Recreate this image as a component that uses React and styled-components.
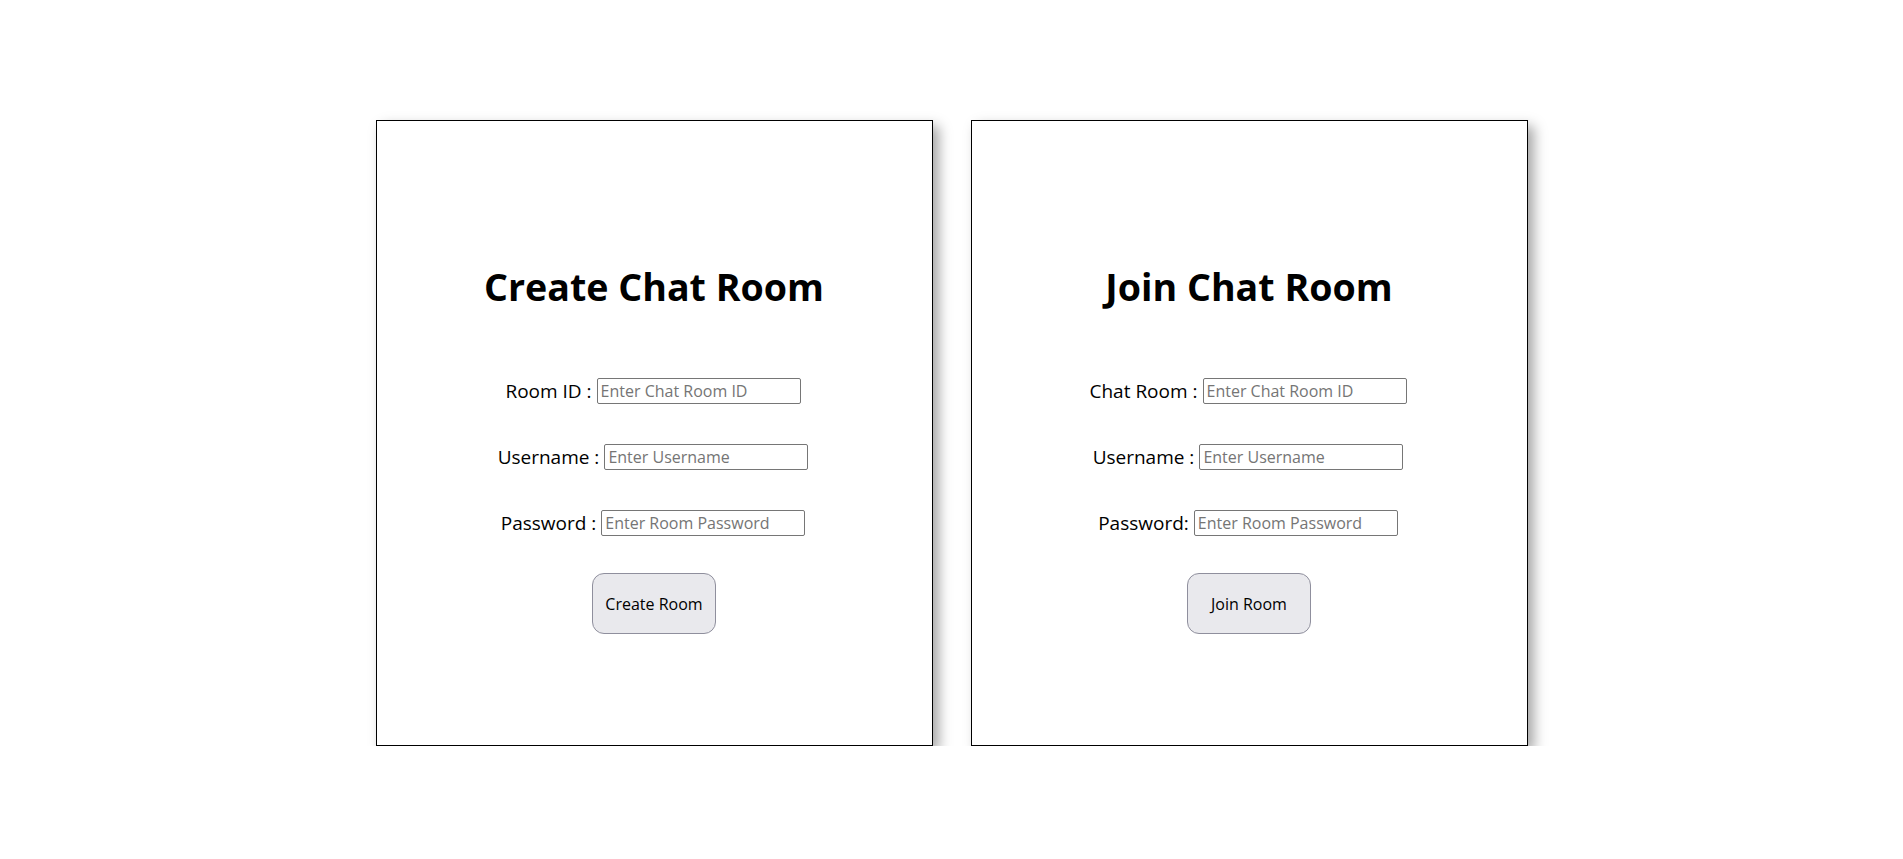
import React, { useState } from 'react'
import styled, { createGlobalStyle } from 'styled-components'

const GlobalStyle = createGlobalStyle`
  body {
    margin: 0;
    background: #fff;
    font-family: "Open Sans", "Noto Sans", sans-serif;
    color: #000;
  }
`

const App = () => {
  const [create, setCreate] = useState({ room: '', user: '', pass: '' })
  const [join, setJoin] = useState({ room: '', user: '', pass: '' })

  return (
    <>
      <GlobalStyle />
      <MainContainer>
        <Card>
          <Title>Create Chat Room</Title>
          <Form>
            <Row>
              <Label>Room ID :</Label>
              <Input placeholder="Enter Chat Room ID" value={create.room} onChange={(e) => setCreate({ ...create, room: e.target.value })} />
            </Row>
            <Row>
              <Label>Username :</Label>
              <Input placeholder="Enter Username" value={create.user} onChange={(e) => setCreate({ ...create, user: e.target.value })} />
            </Row>
            <Row>
              <Label>Password :</Label>
              <Input type="password" placeholder="Enter Room Password" value={create.pass} onChange={(e) => setCreate({ ...create, pass: e.target.value })} />
            </Row>
            <Button type="button">Create Room</Button>
          </Form>
        </Card>
        <Card>
          <Title>Join Chat Room</Title>
          <Form>
            <Row>
              <Label>Chat Room :</Label>
              <Input placeholder="Enter Chat Room ID" value={join.room} onChange={(e) => setJoin({ ...join, room: e.target.value })} />
            </Row>
            <Row>
              <Label>Username :</Label>
              <Input placeholder="Enter Username" value={join.user} onChange={(e) => setJoin({ ...join, user: e.target.value })} />
            </Row>
            <Row>
              <Label>Password:</Label>
              <Input type="password" placeholder="Enter Room Password" value={join.pass} onChange={(e) => setJoin({ ...join, pass: e.target.value })} />
            </Row>
            <Button type="button">Join Room</Button>
          </Form>
        </Card>
      </MainContainer>
    </>
  )
}

export default App

const MainContainer = styled.div`
  display: flex;
  justify-content: center;
  gap: 38px;
  padding-top: 120px;
`

const Card = styled.div`
  box-sizing: border-box;
  width: 557px;
  height: 626px;
  border: 1px solid #000;
  background: #fff;
  box-shadow: 6px 6px 12px rgba(0, 0, 0, 0.35);
  display: flex;
  flex-direction: column;
  align-items: center;
  padding-top: 140px;
`

const Title = styled.h1`
  margin: 0;
  font-size: 37.6px;
  font-weight: 700;
  line-height: 52px;
`

const Form = styled.form`
  display: flex;
  flex-direction: column;
  align-items: center;
  gap: 40px;
  margin-top: 65px;
`

const Row = styled.div`
  display: flex;
  align-items: center;
  gap: 5px;
  height: 26px;
  margin-left: -2px;
`

const Label = styled.label`
  font-size: 19px;
`

const Input = styled.input`
  box-sizing: border-box;
  width: 204px;
  height: 26px;
  padding: 1px 3px;
  border: 1px solid #767676;
  border-radius: 2px;
  font-family: "Open Sans", sans-serif;
  font-size: 16px;
  outline: none;
  &::placeholder {
    color: #757575;
  }
`

const Button = styled.button`
  box-sizing: border-box;
  width: 124px;
  height: 61px;
  margin-top: -3px;
  background: #e9e9ed;
  border: 1px solid #8f8f9d;
  border-radius: 12px;
  font-family: "Open Sans", sans-serif;
  font-size: 16px;
  color: #000;
  cursor: pointer;
`
